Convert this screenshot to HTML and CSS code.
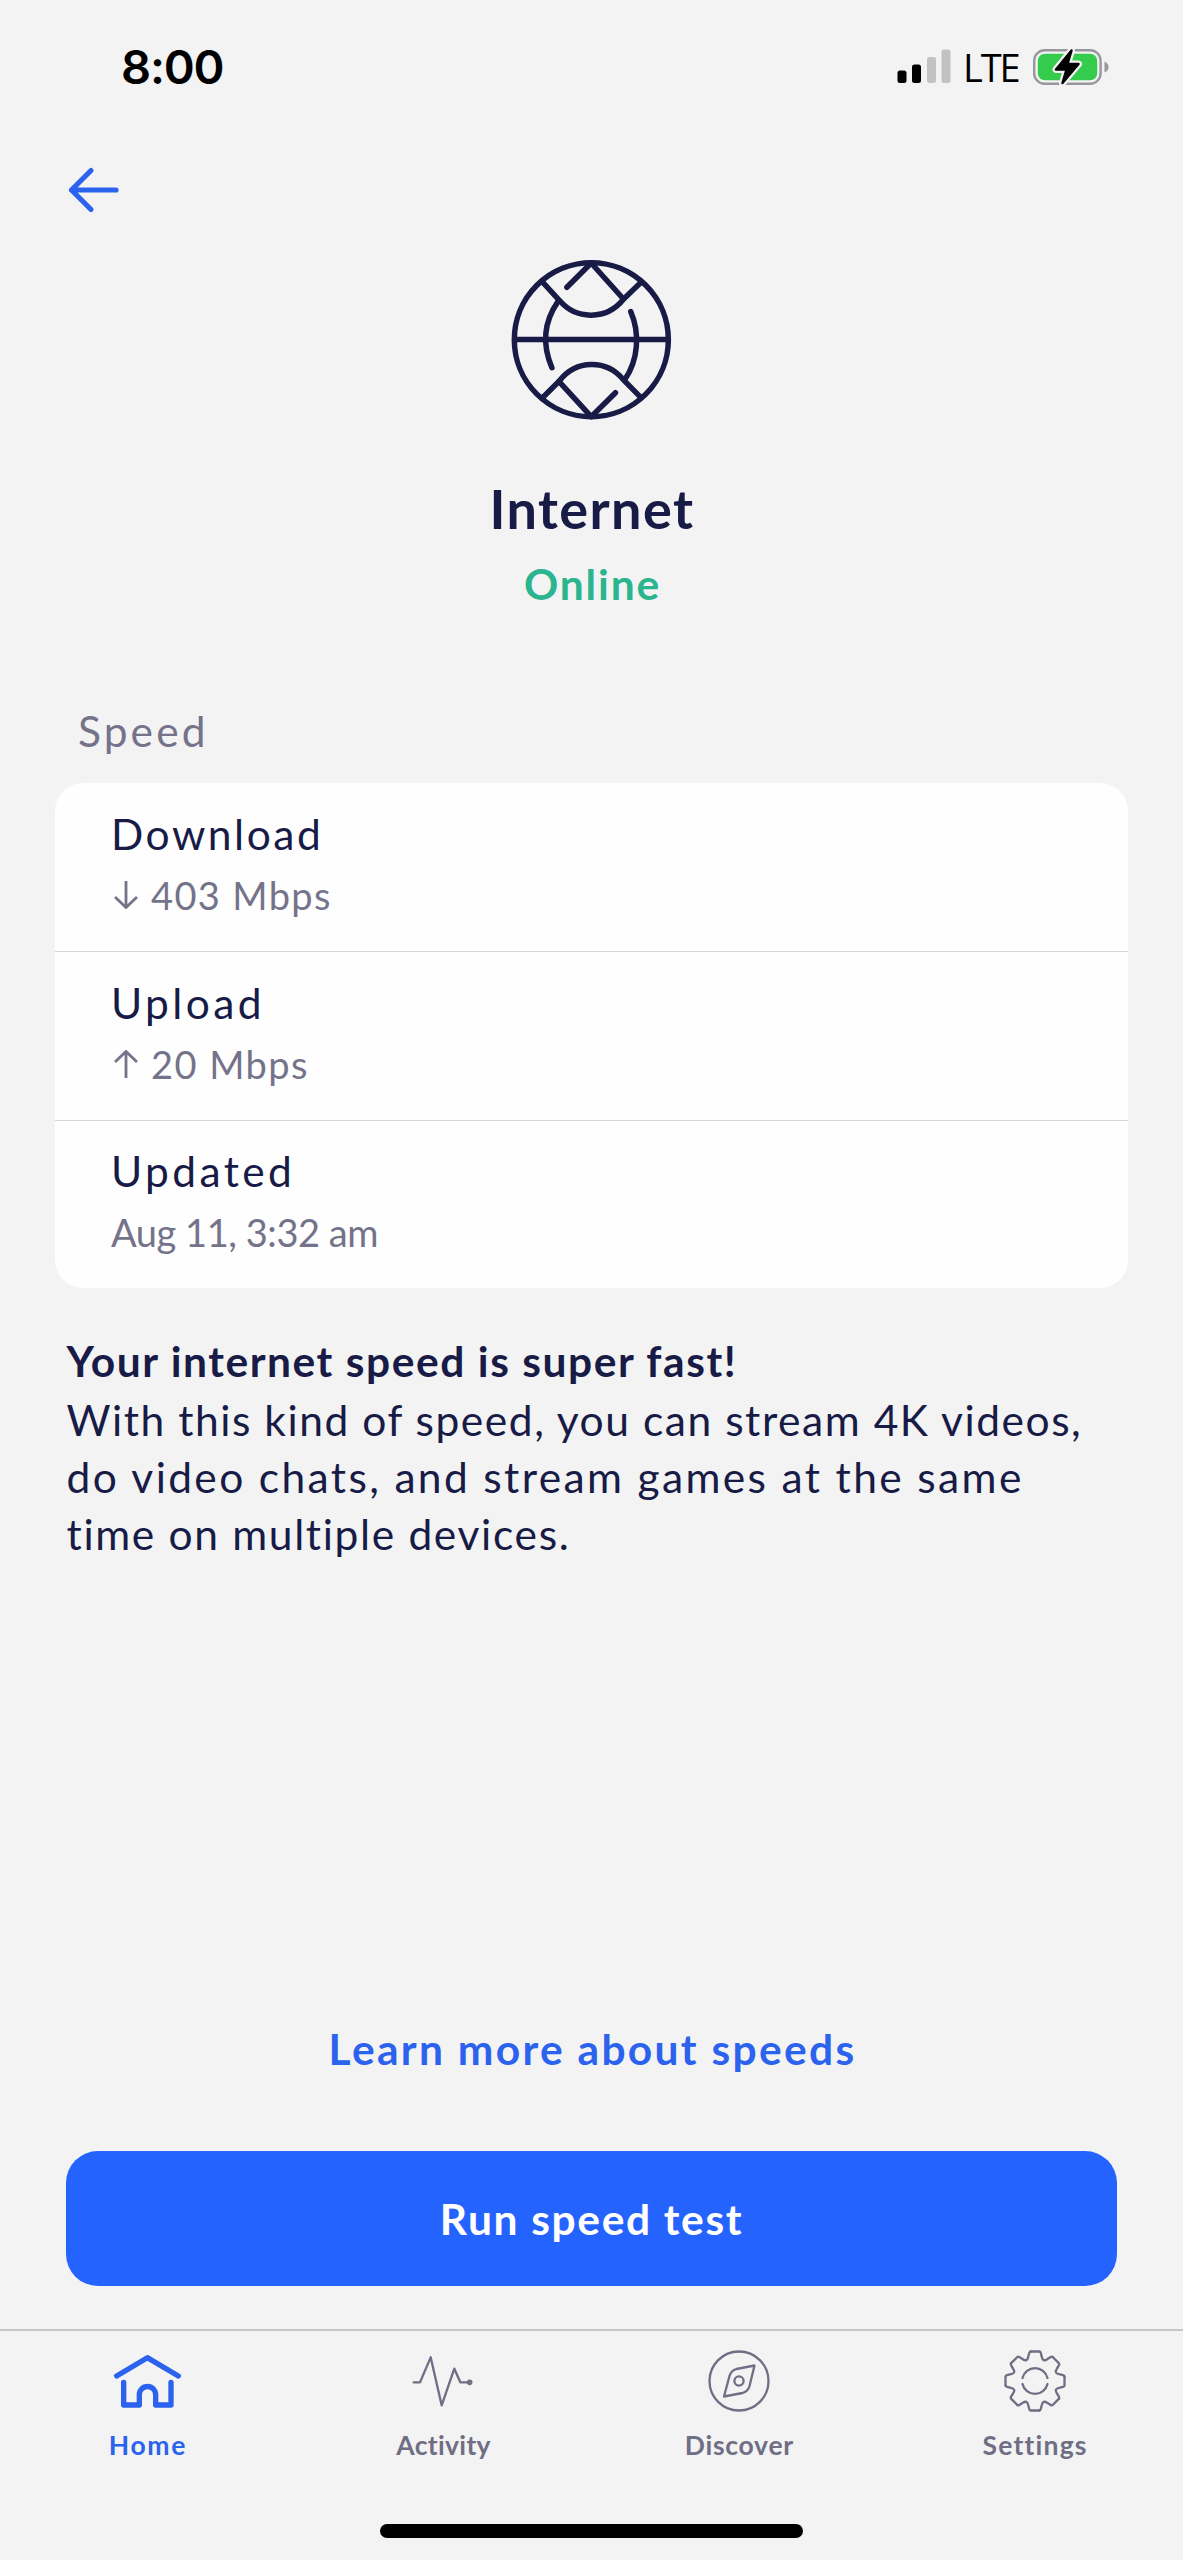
FILE: index.html
```html
<!DOCTYPE html>
<html lang="en">
<head>
<meta charset="utf-8">
<title>Internet</title>
<link rel="stylesheet" href="styles.css">
</head>
<body>
<div class="screen">
  <header class="status">
    <span class="time">8:00</span>
    <div class="indicators">
      <svg class="signal" width="54" height="36" viewBox="0 0 54 36">
        <rect x="0.5" y="21.5" width="9" height="12.5" rx="2.5" fill="#000"/>
        <rect x="15" y="15.5" width="9" height="18.5" rx="2.5" fill="#000"/>
        <rect x="30" y="8" width="9" height="26" rx="2.5" fill="#c2c2c2"/>
        <rect x="44.5" y="0.5" width="9" height="33.5" rx="2.5" fill="#c2c2c2"/>
      </svg>
      <span class="carrier">LTE</span>
      <svg class="battery" width="76" height="40" viewBox="0 0 76 40">
        <rect x="1.2" y="3.2" width="66.4" height="33.6" rx="10.5" fill="none" stroke="#98979d" stroke-width="2.4"/>
        <rect x="4.8" y="6.8" width="59.4" height="26.4" rx="7" fill="#35cb4c"/>
        <path d="M71.5 14.5 Q75.5 16.5 75.5 20 Q75.5 23.5 71.5 25.5Z" fill="#98979d"/>
        <path d="M38.5 3.5 L23 22.5 H33.5 L29.5 36 L45.5 17 H34.5Z" fill="#f3f3f3" stroke="#f3f3f3" stroke-width="7" stroke-linejoin="round"/>
        <path d="M38.5 3.5 L23 22.5 H33.5 L29.5 36 L45.5 17 H34.5Z" fill="#000" stroke="#000" stroke-width="2.5" stroke-linejoin="round"/>
      </svg>
    </div>
  </header>

  <nav class="topbar">
    <svg class="back" width="54" height="50" viewBox="0 0 54 50" fill="none" stroke="#2b62ee" stroke-width="5.2" stroke-linecap="round" stroke-linejoin="round">
      <path d="M24 5.5 L4.5 25 L24 44.5 M4.5 25 H49"/>
    </svg>
  </nav>

  <section class="hero">
    <svg width="163" height="163" viewBox="91 54 490 490" fill="none" stroke="#171b46" stroke-width="16.5" stroke-linecap="round" stroke-linejoin="round">
      <circle cx="335.5" cy="299.5" r="231.5"/>
      <path d="M105 299 H566"/>
      <path d="M187 124 L240 182 C290 241 382 241 432 178 L485 127"/>
      <path d="M262 142 L335 69 L430 175"/>
      <path d="M235 185 C190 250 190 320 217 384"/>
      <path d="M454 215 C482 280 477 360 436 420"/>
      <path d="M188 475 L240 423 C290 359 380 359 430 418 L484 473"/>
      <path d="M238 425 L335 531 L408 459"/>
    </svg>
    <h1 class="title">Internet</h1>
    <p class="state">Online</p>
  </section>

  <main class="content">
    <h2 class="section">Speed</h2>
    <div class="card">
      <div class="row">
        <div class="name download">Download</div>
        <div class="value">
          <svg width="24" height="28" viewBox="0 0 24 28"><path d="M12 0 V26 M1 16 L12 26.5 L23 16"/></svg>
          <span class="rate-down">403 Mbps</span>
        </div>
      </div>
      <div class="row">
        <div class="name">Upload</div>
        <div class="value">
          <svg width="24" height="28" viewBox="0 0 24 28"><path d="M12 28 V2 M1 12 L12 1.5 L23 12"/></svg>
          <span class="rate-up">20 Mbps</span>
        </div>
      </div>
      <div class="row">
        <div class="name">Updated</div>
        <div class="value date">Aug 11, 3:32 am</div>
      </div>
    </div>
    <div class="summary">
      <strong>Your internet speed is super fast!</strong>
      <span class="line-1">With this kind of speed, you can stream 4K videos,</span>
      <span class="line-2">do video chats, and stream games at the same</span>
      <span class="line-3">time on multiple devices.</span>
    </div>
  </main>

  <div class="actions">
    <a class="link">Learn more about speeds</a>
    <button class="primary">Run speed test</button>
  </div>

  <footer class="tabbar">
    <div class="tabs">
      <div class="tab active">
        <svg width="72" height="72" viewBox="156 105 216 216" stroke-width="16">
          <path d="M170 198 L262 143 L355 198"/>
          <path d="M191 217 V285 H238 V254 A24.5 24.5 0 0 1 287 254 V285 H333 V217"/>
        </svg>
        <span class="t-home">Home</span>
      </div>
      <div class="tab">
        <svg width="72" height="72" viewBox="1041 105 216 216" stroke-width="7">
          <path d="M1058 217 H1077 L1109 142 L1142 286 L1180 176 L1198 217 H1224"/>
          <circle cx="1226" cy="217" r="5"/>
        </svg>
        <span class="t-activity">Activity</span>
      </div>
      <div class="tab">
        <svg width="72" height="72" viewBox="0 0 72 72" stroke-width="2.3">
          <circle cx="36" cy="36" r="29.5"/>
          <path d="M51.5 20.5 L33.5 24 Q28 25.5 26.5 31 L21 51.5 L39.5 48 Q45 46.5 46.5 41Z"/>
          <circle cx="36" cy="36" r="4.6"/>
        </svg>
        <span class="t-discover">Discover</span>
      </div>
      <div class="tab">
        <svg width="72" height="72" viewBox="-36 -36 72 72" stroke-width="2.3">
          <defs><path id="tooth" d="M-4.5 -29.5 H4.5 Q5.5 -29.3 5.8 -28 L6.8 -24 Q7.85 -18.9 12.17 -21.78 L15.7 -23.9 Q16.9 -24.6 17.68 -24"/></defs>
          <use href="#tooth"/>
          <use href="#tooth" transform="rotate(45)"/>
          <use href="#tooth" transform="rotate(90)"/>
          <use href="#tooth" transform="rotate(135)"/>
          <use href="#tooth" transform="rotate(180)"/>
          <use href="#tooth" transform="rotate(225)"/>
          <use href="#tooth" transform="rotate(270)"/>
          <use href="#tooth" transform="rotate(315)"/>
          <path d="M-12.5 -3 A12.85 12.85 0 0 1 12.5 -3 M-12.5 3 A12.85 12.85 0 0 0 12.5 3"/>
        </svg>
        <span class="t-settings">Settings</span>
      </div>
    </div>
    <div class="home-indicator"></div>
  </footer>
</div>
</body>
</html>
```
FILE: styles.css
```css
* { box-sizing: border-box; }

body {
  margin: 0;
  background: #f3f3f3;
  color: #171b46;
  font-family: Lato, "Liberation Sans", sans-serif;
}

h1, h2, p { margin: 0; font-weight: 400; }
svg { display: block; flex: none; }

.screen {
  display: flex;
  flex-direction: column;
  height: 2560px;
}

/* Status bar */
.status {
  display: flex;
  justify-content: space-between;
  align-items: center;
  height: 134px;
  padding: 0 74px 0 121px;
  color: #000;
}
.time {
  font: 600 47px/56px Inter, sans-serif;
  letter-spacing: -1.2px;
}
.indicators { display: flex; align-items: center; }
.carrier {
  width: 68px;
  padding-left: 12px;
  margin-right: 14px;
  font: 500 38px/52px "Open Sans", sans-serif;
  letter-spacing: -2.1px;
}

.topbar {
  display: flex;
  align-items: center;
  height: 112px;
  padding-left: 67px;
}

/* Device summary */
.hero {
  display: flex;
  flex-direction: column;
  align-items: center;
  padding-top: 12px;
}
.title {
  margin-top: 55px;
  padding-left: 1px;
  font-size: 54px;
  line-height: 66px;
  font-weight: 700;
  letter-spacing: 1.41px;
}
.state {
  margin-top: 16px;
  padding-left: 2px;
  font-size: 42.5px;
  line-height: 52px;
  font-weight: 700;
  letter-spacing: 1.88px;
  color: #2bb58f;
}

.content { margin-top: 95px; padding: 0 55px; }
.section {
  padding-left: 23px;
  font-size: 42.5px;
  line-height: 52px;
  letter-spacing: 3.1px;
  color: #74738a;
}
.card {
  margin-top: 26px;
  background: #fefefe;
  border-radius: 28px;
}
.row {
  height: 168.4px;
  padding: 25px 56px 0;
}
.row + .row {
  padding-top: 24.5px;
  border-top: 1.5px solid #d6d6d9;
}
.name {
  font-size: 42.5px;
  line-height: 52px;
  letter-spacing: 3.4px;
}
.download { letter-spacing: 2.55px; }
.value {
  display: flex;
  align-items: center;
  gap: 13px;
  margin-top: 12px;
  padding-left: 3px;
  font-size: 38px;
  line-height: 46px;
  color: #74738a;
}
.value svg { fill: none; stroke: #74738a; stroke-width: 2.8; }
.rate-down { letter-spacing: 1.37px; }
.rate-up { letter-spacing: 1.45px; }
.date { padding-left: 0; letter-spacing: -0.45px; }

.summary {
  margin-top: 44px;
  padding-left: 11.5px;
  font-size: 42.5px;
  line-height: 57.2px;
  white-space: nowrap;
}
.summary strong,
.summary span { display: block; }
.summary strong { margin-bottom: 1.5px; letter-spacing: 1.55px; }
.line-1 { letter-spacing: 1.55px; }
.line-2 { letter-spacing: 2.36px; }
.line-3 { letter-spacing: 1.66px; }

/* Actions */
.actions {
  display: flex;
  flex-direction: column;
  align-items: center;
  margin-top: auto;
  padding: 0 66px 43px;
}
.link {
  padding-left: 2px;
  font-size: 42.5px;
  line-height: 52px;
  font-weight: 700;
  letter-spacing: 2.3px;
  color: #2b62ee;
}
.primary {
  width: 100%;
  height: 135px;
  margin-top: 76px;
  border: 0;
  border-radius: 32px;
  background: #2563ff;
  color: #fff;
  font: 700 42.5px/52px Lato, sans-serif;
  letter-spacing: 1.66px;
}

/* Tab bar */
.tabbar {
  display: flex;
  flex-direction: column;
  align-items: center;
  justify-content: space-between;
  height: 231px;
  padding: 14px 0 22px;
  border-top: 2px solid #c6c7c9;
}
.tabs { display: grid; grid-template-columns: repeat(4, 1fr); width: 100%; }
.tab {
  display: flex;
  flex-direction: column;
  align-items: center;
  gap: 11px;
  font-size: 26.5px;
  line-height: 34px;
  font-weight: 700;
  color: #6f6e84;
}
.tab svg {
  fill: none;
  stroke: currentColor;
  stroke-linecap: round;
  stroke-linejoin: round;
}
.tab.active { color: #2b62ee; }
.t-home { letter-spacing: 1.7px; }
.t-activity { letter-spacing: 0.32px; }
.t-discover { letter-spacing: 0.72px; }
.t-settings { letter-spacing: 1.2px; }
.home-indicator {
  width: 423px;
  height: 14px;
  border-radius: 7px;
  background: #000;
}
```
